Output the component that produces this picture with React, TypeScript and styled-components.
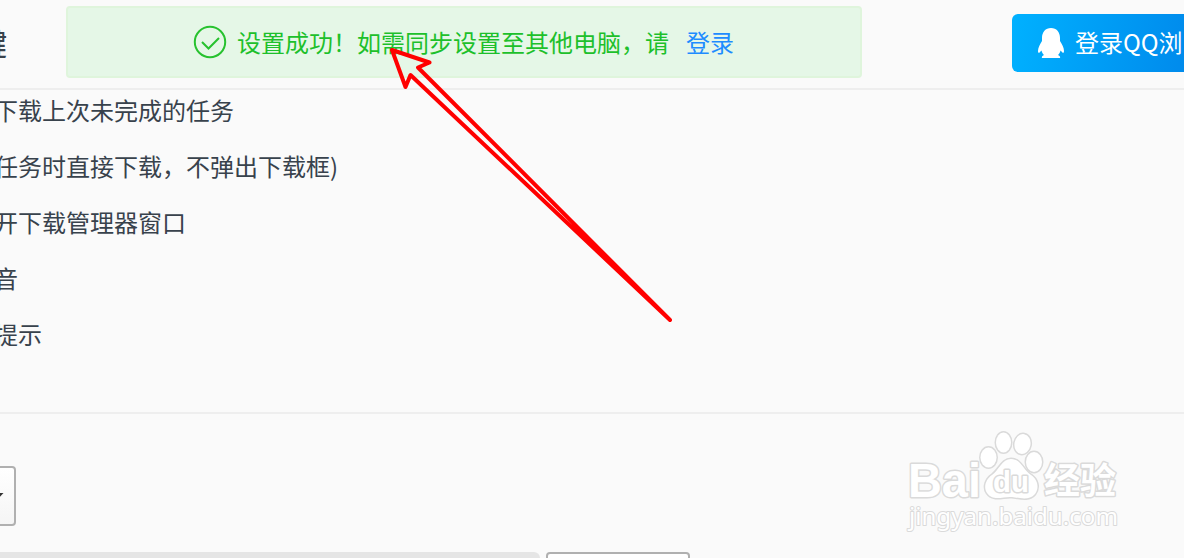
import styled, { createGlobalStyle } from "styled-components";

const GlobalStyle = createGlobalStyle`
  * {
    box-sizing: border-box;
  }

  body {
    margin: 0;
    overflow: hidden;
    background: #fafafa;
    color: #38424c;
    font-family: "Noto Sans CJK SC", sans-serif;
  }
`;

const Page = styled.div`
  position: relative;
  width: 1184px;
  height: 558px;
  overflow: hidden;
  display: flex;
  flex-direction: column;
`;

const Header = styled.header`
  flex: none;
  display: flex;
  align-items: flex-start;
  height: 90px;
  border-bottom: 2px solid #eeeeee;
`;

const Title = styled.h1`
  flex: none;
  display: flex;
  justify-content: flex-end;
  width: 7px;
  margin: 22px 59px 0 0;
  font-size: 30px;
  font-weight: 500;
  line-height: 40px;
  white-space: nowrap;
`;

const Notice = styled.div`
  flex: none;
  display: flex;
  align-items: center;
  width: 796px;
  height: 72px;
  margin-top: 6px;
  padding-left: 125px;
  border: 2px solid #dff5dc;
  border-radius: 4px;
  background: #e5f7e7;
  color: #1dc02b;
  font-size: 24px;
  line-height: 36px;
  white-space: nowrap;
`;

const NoticeText = styled.span`
  margin-left: 10px;
`;

const LoginLink = styled.a`
  margin-left: 17px;
  color: #1e8cff;
`;

const LoginButton = styled.button`
  flex: none;
  display: flex;
  align-items: center;
  gap: 11px;
  width: 230px;
  height: 58px;
  margin: 14px 0 0 150px;
  padding: 0 0 0 26px;
  border: 0;
  border-radius: 6px;
  background: linear-gradient(100deg, #00b1ff 0%, #0086ea 85%);
  color: #fff;
  font-family: inherit;
  font-size: 24px;
  white-space: nowrap;
`;

const ButtonText = styled.span`
  margin-bottom: 3px;
`;

const Options = styled.ul`
  flex: none;
  height: 324px;
  margin: 0;
  padding: 0;
  border-bottom: 2px solid #eeeeee;
  list-style: none;
`;

const Option = styled.li`
  height: 56px;
  margin-left: -6px;
  font-size: 24px;
  line-height: 40px;
  white-space: nowrap;
`;

const SelectBox = styled.div`
  flex: none;
  display: flex;
  align-items: center;
  width: 20px;
  height: 60px;
  margin: 52px 0 0 -4px;
  border: 2px solid #b0b0b0;
  border-radius: 4px;
  background: linear-gradient(#ffffff, #f5f5f5);
`;

const PathRow = styled.div`
  flex: none;
  display: flex;
  gap: 6px;
  height: 40px;
  margin-top: 26px;
`;

const PathField = styled.div`
  width: 546px;
  margin-left: -6px;
  border-radius: 6px;
  background: #e5e5e5;
`;

const PathButton = styled.div`
  width: 144px;
  border: 2px solid #b0b0b0;
  border-radius: 4px;
  background: #ffffff;
`;

const Arrow = styled.svg`
  position: absolute;
  top: 0;
  left: 0;
  pointer-events: none;
`;

const Watermark = styled.svg`
  position: absolute;
  top: 420px;
  left: 890px;
  paint-order: stroke;
`;

const options = [
  "下载上次未完成的任务",
  "任务时直接下载，不弹出下载框)",
  "开下载管理器窗口",
  "音",
  "提示",
];

function CheckIcon() {
  return (
    <svg width="34" height="34" viewBox="0 0 34 34" fill="none" stroke="#27c22f" strokeWidth="2">
      <circle cx="17" cy="17" r="15.2" />
      <path d="M9 17L15.5 23.5L26 13" />
    </svg>
  );
}

function PenguinIcon() {
  return (
    <svg width="26" height="31" viewBox="0 0 26 31" fill="#fff">
      <path d="M13 0C7.5 0 4 4 4 10V13C2 16 0 20 0 23C0 25 1 25.5 2 24L3.5 22.5C4 24.5 5 26 6 27C4 28 3.5 29 4 30H22C22.5 29 22 28 20 27C21 26 22 24.5 22.5 22.5L24 24C25 25.5 26 25 26 23C26 20 24 16 22 13V10C22 4 18.5 0 13 0Z" />
    </svg>
  );
}

function BaiduWatermark() {
  return (
    <Watermark width="250" height="120" viewBox="0 0 250 120" fill="#fff" stroke="#dadada" strokeWidth="3" strokeLinejoin="round">
      <text x="18" y="77" fontFamily="Liberation Sans, sans-serif" fontSize="48" fontWeight="700" textLength="73" lengthAdjust="spacingAndGlyphs">
        Bai
      </text>
      <g strokeWidth="3">
        <ellipse cx="98.5" cy="37.5" rx="8" ry="10" />
        <ellipse cx="113.5" cy="22.5" rx="7.5" ry="10" />
        <ellipse cx="132.5" cy="24" rx="8" ry="10" transform="rotate(10 132.5 24)" />
        <ellipse cx="144" cy="42" rx="8" ry="10" />
        <path d="M121 39C112 39 109 50 102 55C96 59 93 67 97 73C103 82 114 76 122 77C130 78 139 81 145 74C150 67 147 59 141 55C133 50 131 39 121 39Z" />
      </g>
      <text x="103" y="72" fontFamily="Liberation Sans, sans-serif" fontSize="29" fontWeight="700" textLength="36" lengthAdjust="spacingAndGlyphs">
        du
      </text>
      <text x="154" y="74" fontFamily="Noto Sans CJK SC, sans-serif" fontSize="36" fontWeight="700" textLength="72">
        经验
      </text>
      <text x="19" y="105" fontFamily="Noto Sans, sans-serif" fontSize="23" strokeWidth="2" textLength="209" lengthAdjust="spacingAndGlyphs">
        jingyan.baidu.com
      </text>
    </Watermark>
  );
}

export default function App() {
  return (
    <>
      <GlobalStyle />
      <Page>
        <Header>
          <Title>键</Title>
          <Notice>
            <CheckIcon />
            <NoticeText>设置成功！如需同步设置至其他电脑，请</NoticeText>
            <LoginLink>登录</LoginLink>
          </Notice>
          <LoginButton>
            <PenguinIcon />
            <ButtonText>登录QQ浏</ButtonText>
          </LoginButton>
        </Header>
        <Options>
          {options.map((option) => (
            <Option key={option}>{option}</Option>
          ))}
        </Options>
        <SelectBox>
          <svg width="8" height="6" viewBox="0 0 8 6" fill="#333">
            <path d="M0 0H5.5L0 6Z" />
          </svg>
        </SelectBox>
        <PathRow>
          <PathField />
          <PathButton />
        </PathRow>
        <BaiduWatermark />
        <Arrow width="700" height="340" viewBox="0 0 700 340" fill="none" stroke="#ff0000" strokeWidth="4" strokeLinejoin="round">
          <path d="M392 50L429.5 62.5L418 67.5L670 320L410.5 75L405.5 87Z" />
        </Arrow>
      </Page>
    </>
  );
}
